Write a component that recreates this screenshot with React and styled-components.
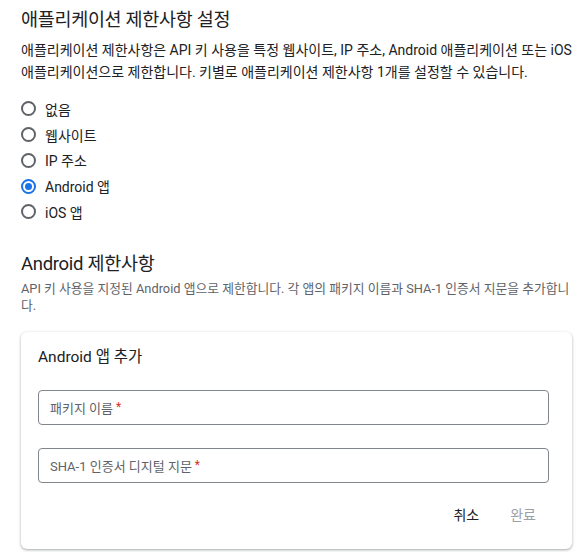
import React from "react";
import styled, { createGlobalStyle } from "styled-components";

const GlobalStyle = createGlobalStyle`
  body {
    margin: 0;
    background: #fff;
    font-family: Roboto, "Noto Sans CJK KR", sans-serif;
    color: #202124;
  }
`;

const Page = styled.div`
  padding: 8px 14px 4px 21px;
`;

const Title = styled.h2`
  margin: 0;
  font-size: 18.5px;
  font-weight: 400;
  letter-spacing: -0.3px;
  line-height: 24px;
  color: #202124;
`;

const Desc = styled.p`
  margin: 7px 0 0;
  font-size: 14px;
  line-height: 22px;
  color: #202124;
`;

const SubDesc = styled.p`
  margin: 4px 0 0;
  font-size: 12.8px;
  line-height: 17px;
  color: #5f6368;
`;

const RadioList = styled.div`
  display: flex;
  flex-direction: column;
  margin-top: 13px;
`;

const RadioRow = styled.label`
  display: flex;
  align-items: center;
  gap: 9px;
  height: 25.75px;
  font-size: 14px;
  color: #202124;
`;

const Circle = styled.span`
  width: 15px;
  height: 15px;
  box-sizing: border-box;
  border-radius: 50%;
  border: 2px solid ${({ checked }) => (checked ? "#1a73e8" : "#5f6368")};
  display: flex;
  align-items: center;
  justify-content: center;
  &::after {
    content: "";
    width: 7px;
    height: 7px;
    border-radius: 50%;
    background: ${({ checked }) => (checked ? "#1a73e8" : "transparent")};
  }
`;

const Section = styled.div`
  margin-top: 27px;
`;

const Card = styled.div`
  margin-top: 18px;
  border-radius: 6px;
  box-shadow: 0 1px 2px rgba(60, 64, 67, 0.3), 0 1px 3px 1px rgba(60, 64, 67, 0.12);
  padding: 15px 23px 24px 17px;
`;

const CardTitle = styled.div`
  font-size: 15.5px;
  line-height: 20px;
  color: #202124;
`;

const Field = styled.div`
  height: 35px;
  box-sizing: border-box;
  border: 1px solid #80868b;
  border-radius: 4px;
  display: flex;
  align-items: center;
  padding-left: 11px;
  font-size: 13px;
  color: #5f6368;
  margin-top: 23px;
`;

const Star = styled.span`
  color: #d93025;
  margin-left: 3px;
  font-size: 12px;
`;

const Actions = styled.div`
  display: flex;
  justify-content: flex-end;
  gap: 31px;
  margin-top: 22px;
  padding-right: 13px;
`;

const TextButton = styled.span`
  font-size: 14px;
  line-height: 20px;
  color: ${({ disabled }) => (disabled ? "#9aa0a6" : "#202124")};
`;

const options = ["없음", "웹사이트", "IP 주소", "Android 앱", "iOS 앱"];

export default function App() {
  return (
    <Page>
      <GlobalStyle />
      <Title>애플리케이션 제한사항 설정</Title>
      <Desc>
        애플리케이션 제한사항은 API 키 사용을 특정 웹사이트, IP 주소, Android 애플리케이션 또는 iOS
        애플리케이션으로 제한합니다. 키별로 애플리케이션 제한사항 1개를 설정할 수 있습니다.
      </Desc>
      <RadioList>
        {options.map((o) => (
          <RadioRow key={o}>
            <Circle checked={o === "Android 앱"} />
            {o}
          </RadioRow>
        ))}
      </RadioList>
      <Section>
        <Title>Android 제한사항</Title>
        <SubDesc>
          API 키 사용을 지정된 Android 앱으로 제한합니다. 각 앱의 패키지 이름과 SHA-1 인증서 지문을 추가합니다.
        </SubDesc>
        <Card>
          <CardTitle>Android 앱 추가</CardTitle>
          <Field>
            패키지 이름<Star>*</Star>
          </Field>
          <Field>
            SHA-1 인증서 디지털 지문<Star>*</Star>
          </Field>
          <Actions>
            <TextButton>취소</TextButton>
            <TextButton disabled>완료</TextButton>
          </Actions>
        </Card>
      </Section>
    </Page>
  );
}
